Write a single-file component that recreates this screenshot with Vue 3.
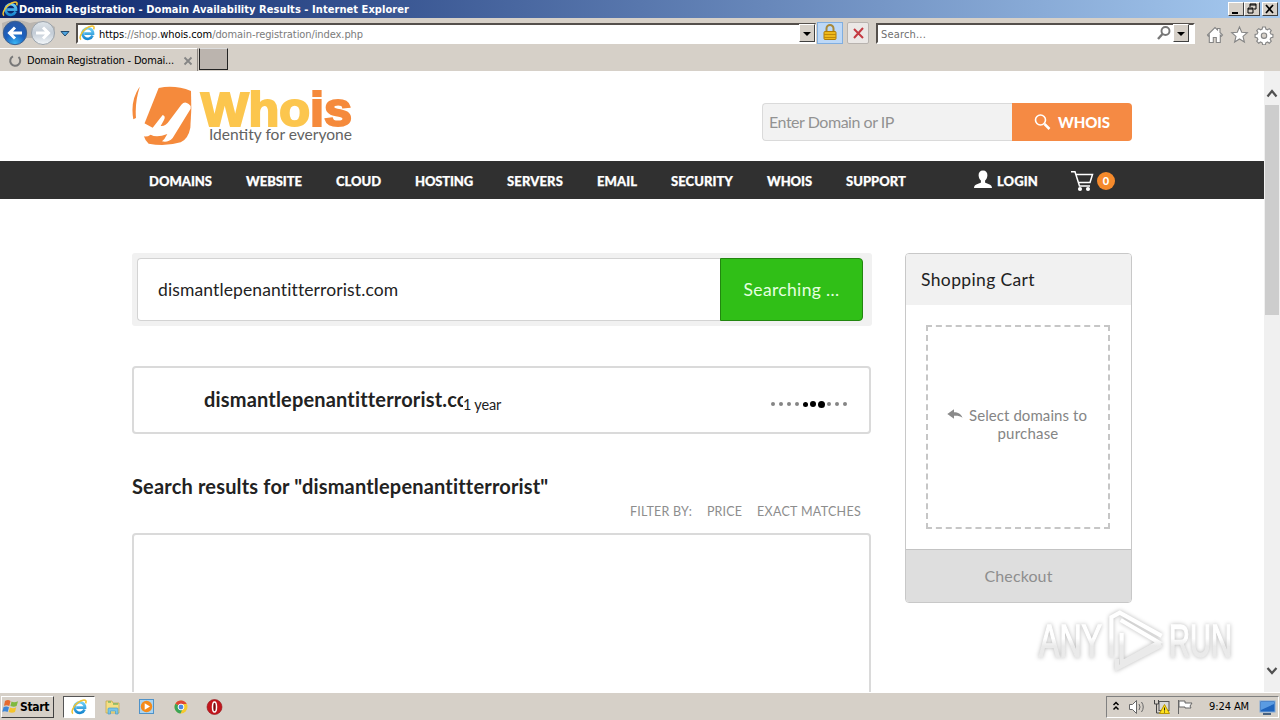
<script setup>
const menu = [
  ['DOMAINS', 63], ['WEBSITE', 56], ['CLOUD', 45], ['HOSTING', 58], ['SERVERS', 56],
  ['EMAIL', 40], ['SECURITY', 62], ['WHOIS', 45], ['SUPPORT', 60],
]
const dots = [4, 4, 4, 4, 5, 6, 7, 4, 4, 4]

// Tracks a label out (or in) so that it fills the given width.
const vFit = {
  mounted(el, { value }) {
    const extra = value - el.getBoundingClientRect().width
    el.style.letterSpacing = extra / el.textContent.length + 'px'
  },
}
</script>

<template>
  <div class="desktop">
    <svg class="defs" width="0" height="0">
      <defs>
        <linearGradient id="eblue" x1="0" y1="0" x2="0" y2="1">
          <stop offset="0" stop-color="#6fd0f8" /><stop offset="1" stop-color="#1787d0" />
        </linearGradient>
        <radialGradient id="ball" cx=".5" cy=".95" r=".9">
          <stop offset="0" stop-color="#3bb7f5" /><stop offset=".5" stop-color="#1a5fbe" /><stop offset="1" stop-color="#2a5aa8" />
        </radialGradient>
        <linearGradient id="silver" x1="0" y1="0" x2="0" y2="1">
          <stop offset="0" stop-color="#dfe5ea" /><stop offset=".5" stop-color="#c3ccd6" /><stop offset="1" stop-color="#f4f8fb" />
        </linearGradient>
        <symbol id="ie" viewBox="0 0 16 16">
          <path d="M13.6 10.6A5.3 5.3 0 1 1 14 8.6H5.2" fill="none" stroke="url(#eblue)" stroke-width="2.7" />
          <path d="M2 14.6C-1 12 5 2.5 12 1.2C15 .7 15.6 2.2 14.6 4.4" fill="none" stroke="#f2c230" stroke-width="1.5" />
        </symbol>
      </defs>
    </svg>

    <header class="title">
      <svg width="16" height="16"><use href="#ie" /></svg>
      <b v-fit="390" class="fit">Domain Registration - Domain Availability Results - Internet Explorer</b>
      <div class="winbtns">
        <i class="wb"><svg width="14" height="12"><path d="M3 9h6v2H3z" /></svg></i>
        <i class="wb"><svg width="14" height="12"><path d="M5 1h6v5h-2M5 1v3M5 2h6M3 5h5v5H3zM3 6h5" fill="none" stroke="#000" /></svg></i>
        <i class="wb gap"><svg width="14" height="12"><path d="M3 2l7 8M10 2l-7 8" stroke="#000" stroke-width="1.7" /></svg></i>
      </div>
    </header>

    <div class="toolbar">
      <svg class="nav-balls" width="74" height="30">
        <path d="M2 5Q15-1 30 5Q44 1 55 9L54 20H3z" fill="#a8a5a0" opacity=".6" />
        <circle cx="15" cy="15" r="11.7" fill="url(#ball)" stroke="#3b5f90" />
        <path d="M22 15H10M15 9.500l-5.500 5.500 5.500 5.500" fill="none" stroke="#fff" stroke-width="3" />
        <circle cx="43" cy="15" r="11.500" fill="url(#silver)" stroke="#9ba3ab" />
        <path d="M36 15h12M43 9.500l5.500 5.500-5.500 5.500" fill="none" stroke="#fff" stroke-width="3" />
        <path d="M61 13.500h8l-4 4.500z" fill="#4da4e0" stroke="#21496c" />
      </svg>
      <div class="address">
        <svg width="16" height="16"><use href="#ie" /></svg>
        <span v-fit="264" class="fit url"><em>https</em>://shop.<em>whois.com</em>/domain-registration/index.php</span>
        <i class="drop"><svg width="14" height="17"><path d="M3 7h8l-4 4z" /></svg></i>
      </div>
      <div class="tb lock"><svg width="24" height="20"><path d="M8.500 9V5.500a3.500 3.500 0 0 1 7 0V9" fill="none" stroke="#a8893a" stroke-width="2" /><rect x="6" y="8.500" width="12" height="8" rx="1" fill="#eeb91c" stroke="#b17d07" /><path d="M6 11.500h12M6 14.500h12" stroke="#c28a09" /></svg></div>
      <div class="tb stop"><svg width="19" height="20"><path d="M5 6l9 9M14 5l-9 10" stroke="#c43a42" stroke-width="2" /></svg></div>
      <div class="search">
        <span v-fit="45" class="fit">Search...</span>
        <svg width="17" height="18"><circle cx="9.500" cy="7" r="4" fill="none" stroke="#777" stroke-width="1.900" /><path d="M6.500 10l-4.500 5" stroke="#777" stroke-width="2.400" /></svg>
        <i class="drop"><svg width="14" height="17"><path d="M3 7h8l-4 4z" /></svg></i>
      </div>
      <svg class="tools" width="70" height="20" fill="#fff" stroke="#858585" stroke-width="1.100">
        <path d="M1.500 10L9 2.500l2.500 2.500V3.500H14V7.500l2.500 2.500-1.200 1.200-1-1V17.500h-4v-5h-3v5h-4v-7.300l-1 1z" />
        <path d="M33.500 2l2.200 5.300 5.600.4-4.300 3.700 1.400 5.600-4.900-3-4.900 3 1.400-5.600-4.300-3.700 5.600-.4z" />
        <path d="M56.600 2h2.800l.4 2 1.700.8 1.800-1.200 2 2-1.200 1.800.8 1.700 2 .4v2.800l-2 .4-.8 1.700 1.200 1.800-2 2-1.800-1.200-1.700.8-.4 2h-2.800l-.4-2-1.700-.8-1.800 1.200-2-2 1.200-1.800-.8-1.700-2-.4V9.500l2-.4.8-1.700-1.200-1.800 2-2 1.800 1.200 1.700-.8z" />
        <circle cx="58" cy="10.700" r="2.700" fill="#d6d0c8" />
      </svg>
    </div>

    <div class="tabs">
      <div class="tab">
        <svg width="14" height="14"><path d="M5 2.300A5 5 0 1 0 10.500 3" fill="none" stroke="#777" stroke-width="2" /></svg>
        <span v-fit="147" class="fit">Domain Registration - Domai...</span>
        <svg width="10" height="10"><path d="M1.500 1.500l7 7M8.500 1.500l-7 7" stroke="#858585" stroke-width="1.800" /></svg>
      </div>
      <i class="newtab"></i>
    </div>

    <div class="view">
      <main class="page">
        <div class="brandbar wrap">
          <svg class="logo" width="232" height="80" viewBox="0 0 232 80">
            <g transform="scale(.33333) translate(-36 0)">
              <path d="M58 34Q30 75 40 130L48 126Q44 80 59 34Z" fill="#f58a3c" />
              <path d="M116 36Q165 26 213 45Q216 100 211 155Q205 188 182 199Q135 213 86 203Q64 184 72 146Z" fill="#f58a3c" />
              <path d="M66 138L98 155L128 117Q138 120 132 132L122 150Q136 152 148 134L184 86Q194 74 206 84L212 90V98L158 186Q144 201 126 196Q134 190 142 174Q110 186 92 176Q78 186 62 178Z" fill="#fff" />
            </g>
            <text x="69" y="50" class="whois" textLength="151" lengthAdjust="spacingAndGlyphs"><tspan fill="#fcc64e" stroke="#fcc64e">Who</tspan><tspan fill="#f58a3c" stroke="#f58a3c">is</tspan></text>
            <text x="77" y="64" class="tagline" textLength="143" lengthAdjust="spacingAndGlyphs">Identity for everyone</text>
          </svg>
          <div class="whoisbox">
            <div class="whoisinput"><span v-fit="125" class="fit">Enter Domain or IP</span></div>
            <div class="whoisbtn">
              <svg width="17" height="18" fill="none" stroke="#fff"><circle cx="6.500" cy="7" r="5" stroke-width="1.600" /><path d="M10.500 11l5 5" stroke-width="2.500" /></svg>
              <b v-fit="52" class="fit">WHOIS</b>
            </div>
          </div>
        </div>
        <nav class="nav">
          <div class="wrap navin">
            <b v-for="m in menu" :key="m[0]" v-fit="m[1]" class="fit">{{ m[0] }}</b>
            <div class="login">
              <svg width="20" height="19" fill="#fff"><path d="M10 .5c3 0 4.600 2 4.400 5-.2 2.800-1.300 4-2.300 5v2c1.200 1.200 6.900 1.500 6.900 5.500H1c0-4 5.700-4.300 6.900-5.500v-2c-1-1-2.100-2.200-2.300-5C5.400 2.500 7 .5 10 .5z" /></svg>
              <b v-fit="41" class="fit">LOGIN</b>
            </div>
            <div class="cart">
              <svg width="25" height="22" fill="none" stroke="#fff" stroke-width="1.500"><path d="M1 1.700h4l4.500 14.300H20M6 4.500h16.500l-2.500 8H8.500" /><circle cx="10" cy="19" r="1.300" fill="#fff" /><circle cx="18" cy="19" r="1.300" fill="#fff" /></svg>
              <b class="badge">0</b>
            </div>
          </div>
        </nav>
        <div class="wrap cols">
          <section class="left">
            <div class="finder">
              <div class="field"><span v-fit="240" class="fit">dismantlepenantitterrorist.com</span></div>
              <div class="go"><span v-fit="96" class="fit">Searching ...</span></div>
            </div>
            <div class="result">
              <div class="clip"><b v-fit="281" class="fit">dismantlepenantitterrorist.com</b></div>
              <span v-fit="38" class="fit year">1 year</span>
              <div class="dots"><div v-for="(d, i) in dots" :key="i" class="dotcell"><i :class="{ on: d > 4 }" :style="{ width: d + 'px', height: d + 'px' }"></i></div></div>
            </div>
            <h2><span v-fit="416" class="fit">Search results for "dismantlepenantitterrorist"</span></h2>
            <div class="filters">
              <span v-fit="62" class="fit">FILTER BY:</span><span v-fit="35" class="fit">PRICE</span><span v-fit="104" class="fit">EXACT MATCHES</span>
            </div>
            <div class="list"></div>
          </section>
          <aside class="side">
            <div class="sidehead"><span v-fit="114" class="fit">Shopping Cart</span></div>
            <div class="sidebody">
              <div class="dash">
                <svg width="16" height="12" fill="#8a8a8a"><path d="M.3 5L7 .3v3c4 0 7 1.500 8.500 5.500C13 6.800 10.500 6.500 7 6.700v3z" /></svg>
                <div class="hint"><span v-fit="118" class="fit">Select domains to</span><span v-fit="61" class="fit">purchase</span></div>
              </div>
            </div>
            <div class="checkout"><span v-fit="68" class="fit">Checkout</span></div>
          </aside>
        </div>
      </main>
      <div class="scroll">
        <svg width="16" height="33"><path d="M3.500 25.500L8 20l4.500 5.500" fill="none" stroke="#505050" stroke-width="2.200" /></svg>
        <i class="thumb"></i>
        <svg class="down" width="16" height="30"><path d="M3.500 6L8 11l4.500-5" fill="none" stroke="#505050" stroke-width="2.200" /></svg>
      </div>
      <svg class="mark" width="216" height="76" viewBox="0 0 216 76">
        <defs><linearGradient id="wm" x1="0" y1="0" x2="0" y2="1"><stop offset=".45" stop-color="#fff" /><stop offset=".6" stop-color="#eaeaea" /></linearGradient></defs>
        <text x="8" y="54" textLength="63" lengthAdjust="spacingAndGlyphs">ANY</text>
        <text x="138" y="54" textLength="63" lengthAdjust="spacingAndGlyphs">RUN</text>
        <g transform="translate(6 4) scale(.93)" fill="none" stroke="url(#wm)" stroke-width="4.500">
          <path d="M90 14L131 38L91 60V28" />
          <path d="M80 54V11L89 6L134 31M86 56V66L134 41" />
        </g>
      </svg>
    </div>

    <footer class="task">
      <div class="start">
        <svg width="17" height="17"><path d="M3 3q3-2 5.500 0L7.300 8Q5 6.500 2 7.800z" fill="#e66a2e" /><path d="M9.500 3.500Q12 5 16 3.300L14.600 8Q12 9.500 8.400 8z" fill="#7fb93e" /><path d="M1.600 9Q4.500 7.800 7 9.300L5.600 14Q3 12.500.3 13.800z" fill="#3c86d8" /><path d="M8 9.500Q11 11 14.200 9.300L13 14Q10 15.500 6.700 14z" fill="#f5c42c" /></svg>
        <b v-fit="29" class="fit">Start</b>
      </div>
      <div class="pinned active"><svg width="16" height="16"><use href="#ie" /></svg></div>
      <div class="pinned"><svg width="18" height="18"><path d="M2 3h6l1 2h6v10H2z" fill="#f5df83" stroke="#c8aa4b" stroke-width=".8" /><path d="M4 4h3M9 6h5" stroke="#49a860" /><path d="M4 16v-5q0-1 1-1h8q1 0 1 1v5h-2.500v-3h-5v3z" fill="#78c4e8" stroke="#4a9dc6" stroke-width=".7" /></svg></div>
      <div class="pinned"><svg width="18" height="18"><rect x="1.500" y="1.500" width="14" height="14" fill="#a9d4f2" stroke="#4f92c8" /><circle cx="8.500" cy="8.500" r="5.700" fill="#f58b1b" /><path d="M6.700 5.300v6.400L12 8.500z" fill="#fff" /></svg></div>
      <div class="pinned"><svg width="18" height="18"><circle cx="9" cy="9" r="6.500" fill="#f5c92e" /><path d="M9 9L3.400 5.700A6.500 6.500 0 0 1 14.700 6H9z" fill="#df4635" /><path d="M9 9L3.400 5.700A6.500 6.500 0 0 0 8.500 15.500L11 10z" fill="#3ba457" /><circle cx="9" cy="9" r="2.900" fill="#4a87e0" stroke="#fff" /></svg></div>
      <div class="pinned"><svg width="18" height="18"><circle cx="8.500" cy="9" r="7.500" fill="#c3161d" stroke="#8f1016" stroke-width=".6" /><ellipse cx="8.500" cy="9" rx="2" ry="5" fill="#7d0b10" stroke="#fff" stroke-width="1.500" /></svg></div>
      <div class="tray">
        <svg width="90" height="22">
          <path d="M6.500 9l2.500-2.500 2.500 2.500M6.500 13.500l2.500-2.500 2.500 2.500" fill="none" stroke="#000" stroke-width="1.500" />
          <g fill="#fff" stroke="#666"><path d="M22.500 8.500h3l4-4v13l-4-4h-3z" /><path d="M32 8q2 3 0 6M34.500 6q3.500 5 0 10" fill="none" /></g>
          <rect x="52" y="5.500" width="10" height="9" fill="#d8d8d8" stroke="#555" /><path d="M47.500 4v4h4V4M49.500 8v9h6" fill="none" stroke="#444" /><path d="M57.500 8.500l5 9h-10z" fill="#ffe11b" stroke="#b99600" /><path d="M57.500 11.500v3m0 1v1" stroke="#222" />
          <path d="M71.500 4v14M72 5h6v2h7l-2 3 1 2h-6v-1h-6z" fill="#fff" stroke="#666" />
        </svg>
        <span v-fit="40" class="fit">9:24 AM</span>
        <svg width="18" height="18"><rect x="2" y="3" width="15" height="11" fill="#1f64bd" stroke="#7ea8d8" /><path d="M3 4h13v2L3 12z" fill="#5a9be2" /><path d="M5 16h8" stroke="#48617e" stroke-width="2" /></svg>
      </div>
    </footer>
  </div>
</template>

<style>
html, body { margin: 0; overflow: hidden; }
</style>

<style scoped>
.desktop { position: relative; width: 1280px; height: 720px; display: flex; flex-direction: column; overflow: hidden; background: #d6d0c8; font: 11px "DejaVu Sans Condensed", "DejaVu Sans", sans-serif; color: #000; }
.defs { position: absolute; }
svg { display: block; flex: none; }
.fit { display: inline-block; white-space: nowrap; flex: none; }
i { display: block; }
.title { height: 18px; display: flex; align-items: center; padding-left: 2px; color: #fff; background: linear-gradient(90deg, #0a246a, #a6caf0); flex: none; }
.title b { font-size: 11px; margin-left: 1px; }
.winbtns { margin-left: auto; display: flex; padding-right: 2px; }
.wb { width: 14px; height: 12px; background: #d6d0c8; border: 1px solid; border-color: #fff #404040 #404040 #fff; box-sizing: content-box; }
.wb svg { width: 14px; height: 12px; }
.wb.gap { margin-left: 2px; }
.toolbar { height: 30px; display: flex; align-items: center; flex: none; }
.nav-balls { margin-right: 2px; }
.address { width: 740px; height: 21px; box-sizing: border-box; background: #fff; border: 2px solid; border-color: #55504c #fff #fff #55504c; border-right-width: 1px; display: flex; align-items: center; padding-left: 1px; }
.url { margin: 2px 0 0 4px; color: #7b7b7b; }
.url em { font-style: normal; color: #000; }
.drop { margin-left: auto; width: 14px; height: 16px; background: #d6d0c8; border: 1px solid; border-color: #fff #404040 #404040 #fff; }
.drop svg { width: 14px; height: 16px; }
.tb { box-sizing: border-box; height: 22px; display: flex; align-items: center; justify-content: center; border: 1px solid #80aee0; }
.lock { width: 26px; margin-left: 1px; background: #bdd8f7; }
.stop { width: 22px; margin-left: 4px; background: #ebe8e6; border-color: #b8b3af; border-radius: 2px; }
.search { margin-left: 7px; width: 319px; height: 21px; box-sizing: border-box; background: #fff; border: 2px solid; border-color: #55504c #fff #fff #55504c; display: flex; align-items: center; color: #6f6f6f; padding: 0 4px 0 3px; }
.search .fit { margin-top: 2px; }
.search svg { margin-left: auto; }
.search .drop { margin-left: 0; color: #000; }
.search .drop svg { margin: 0; }
.tools { margin-left: 11px; margin-top: 4px; }
.tabs { height: 23px; display: flex; flex: none; }
.tab { width: 198px; height: 23px; display: flex; align-items: center; box-sizing: border-box; padding: 1px 5px 0 8px; border-top: 1px solid #fff; border-right: 1px solid #8b8681; }
.tab .fit { margin: 0 9px 0 5px; }
.newtab { width: 27px; height: 20px; background: #bbb4ae; border: 1px solid #222; border-top-color: #ddd; margin-left: 1px; box-sizing: content-box; }
.view { position: relative; display: flex; height: 621px; flex: none; background: #fff; }
.page { width: 1264px; height: 621px; overflow: hidden; font-family: Lato, sans-serif; }
.wrap { width: 1000px; margin: 0 auto; }
.brandbar { height: 90px; display: flex; justify-content: space-between; }
.logo { margin-top: 5px; }
.whois { font: bold 48px "Liberation Sans", Arial, sans-serif; stroke-width: 2.2px; }
.tagline { font: 400 14.5px Lato, sans-serif; fill: #626262; }
.whoisbox { display: flex; width: 370px; height: 38px; margin-top: 32px; font-size: 16px; }
.whoisinput { width: 250px; box-sizing: border-box; padding: 0 6px 1px; border: 1px solid #dadada; border-right: 0; border-radius: 4px 0 0 4px; background: #f2f2f2; color: #929292; display: flex; align-items: center; }
.whoisbtn { width: 120px; background: #f58a44; border-radius: 0 4px 4px 0; color: #fff; display: flex; align-items: center; padding-left: 22px; gap: 7px; box-sizing: border-box; }
.whoisbtn b { font-weight: 900; font-size: 15px; }
.nav { height: 38px; background: #303030; color: #fff; }
.navin { height: 38px; display: flex; align-items: center; gap: 34px; box-sizing: border-box; padding: 2px 0 0 17px; font-size: 13px; }
.navin b { font-weight: 900; }
.navin > .fit, .login b { -webkit-text-stroke: .25px #fff; }
.login { display: flex; align-items: center; gap: 4px; margin-left: 33px; }
.login svg { margin-top: -4px; }
.cart { display: flex; align-items: center; gap: 2px; margin-left: -2px; }
.cart svg { margin-top: -1px; }
.cart .badge { width: 18px; height: 18px; border-radius: 50%; background: #f58a2c; font-size: 11px; line-height: 18px; text-align: center; }
.cols { display: flex; justify-content: space-between; padding-top: 54px; color: #222; }
.left { width: 740px; }
.finder { display: flex; height: 73px; box-sizing: border-box; padding: 5px 9px 5px 5px; background: #f1f1f1; border-radius: 3px; }
.field { flex: 1; box-sizing: border-box; background: #fff; border: 1px solid #d3d3d3; border-width: 1px 0 1px 1px; border-radius: 4px 0 0 4px; padding: 0 0 1px 20px; display: flex; align-items: center; font-size: 17.5px; }
.go { width: 143px; box-sizing: border-box; background: #30bf17; border: 1px solid #22860f; border-radius: 0 4px 4px 0; color: #e6ffe0; display: flex; align-items: center; justify-content: center; padding-bottom: 1px; font-size: 17.5px; }
.result { width: 739px; height: 68px; margin-top: 40px; box-sizing: border-box; border: 2px solid #dadada; border-radius: 4px; display: flex; align-items: center; padding: 0 18px 0 70px; }
.clip { width: 259px; overflow: hidden; font-size: 20px; line-height: 24px; margin-top: -2px; }
.year { font-size: 14.5px; margin: 8px 0 0; }
.dots { display: flex; margin: 8px 2px 0 auto; }
.dotcell { width: 8px; display: flex; align-items: center; justify-content: center; flex: none; }
.dotcell i { border-radius: 50%; background: #858585; flex: none; }
.dotcell i.on { background: #000; }
h2 { margin: 40px 0 0; height: 24px; font-size: 20px; line-height: 24px; }
.filters { display: flex; justify-content: flex-end; gap: 15px; height: 16px; line-height: 16px; margin: 6px 11px 0 0; font-size: 12.5px; color: #8d8d8d; }
.list { width: 739px; height: 180px; box-sizing: border-box; margin-top: 13px; border: 2px solid #dadada; border-radius: 4px; }
.side { width: 227px; height: 350px; box-sizing: border-box; border: 1px solid #c8c8c8; border-radius: 4px; overflow: hidden; }
.sidehead { height: 51px; box-sizing: border-box; background: #f1f1f1; padding: 0 0 1px 15px; display: flex; align-items: center; font-size: 17.5px; }
.sidebody { height: 244px; padding: 20px; box-sizing: border-box; }
.dash { width: 184px; height: 204px; box-sizing: border-box; border: 2px dashed #c6c6c6; display: flex; align-items: flex-start; padding: 79px 0 0 19px; gap: 6px; font-size: 15px; line-height: 18px; color: #858585; }
.dash svg { margin-top: 3px; }
.hint { width: 118px; display: flex; flex-direction: column; align-items: center; }
.checkout { height: 53px; box-sizing: border-box; padding-bottom: 2px; background: #dedede; border-top: 1px solid #c3c3c3; display: flex; align-items: center; justify-content: center; font-size: 16px; color: #8e8e8e; }
.scroll { width: 16px; background: #f0f0f0; display: flex; flex-direction: column; }
.thumb { width: 14px; height: 210px; margin: 1px auto 0; background: #cdcdcd; }
.down { margin-top: auto; }
.mark { position: absolute; left: 1031px; top: 532px; filter: drop-shadow(0 0 2px rgba(0, 0, 0, .28)); }
.mark text { font: 46px "Liberation Sans Narrow", "Liberation Sans", sans-serif; fill: url(#wm); stroke: url(#wm); stroke-width: 1.4px; }
.task { height: 28px; box-sizing: border-box; border-top: 1px solid #fff; display: flex; align-items: center; flex: none; padding-left: 1px; }
.start { width: 51px; height: 20px; display: flex; align-items: center; gap: 1px; border: 1px solid; border-color: #fff #404040 #404040 #fff; margin-right: 9px; }
.start b { font-size: 12px; }
.pinned { width: 34px; height: 22px; display: flex; align-items: center; justify-content: center; }
.active { width: 30px; height: 20px; background: #fff; border: 1px solid #808080; border-color: #555 #fff #fff #555; }
.active + .pinned { margin-left: 1px; }
.tray { margin-left: auto; width: 171px; height: 20px; border: 1px solid; border-color: #808080 #fff #fff #808080; display: flex; align-items: center; margin-right: 1px; }
.tray .fit { margin: 0 9px 0 12px; }
</style>
